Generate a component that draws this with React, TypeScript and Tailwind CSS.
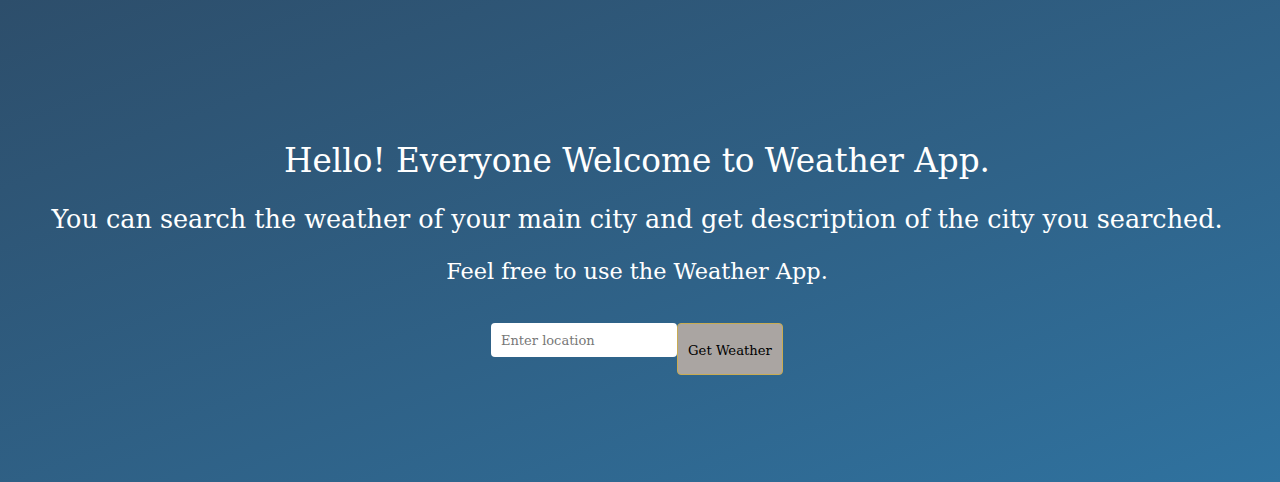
import React from "react";

export default function App() {
  return (
    <div
      className="w-[1280px] h-[482px] bg-gradient-to-br from-[#2d4e6b] to-[#2f729f] flex flex-col items-center text-white pr-[6px]"
      style={{ fontFamily: '"DejaVu Serif", Georgia, serif' }}
    >
      <h1 className="mt-[138px] text-[32.7px] leading-[46px] font-normal">Hello! Everyone Welcome to Weather App.</h1>
      <h2 className="mt-[17px] text-[25.5px] leading-[36px] font-normal">
        You can search the weather of your main city and get description of the city you searched.
      </h2>
      <p className="mt-[19px] text-[22.4px] leading-[30px]">Feel free to use the Weather App.</p>
      <div className="mt-[37px] flex items-start">
        <input
          type="text"
          placeholder="Enter location"
          className="w-[186px] h-[34px] rounded-[4px] bg-white px-[10px] text-[13px] text-black placeholder:text-[#777] outline-none"
        />
        <button className="w-[106px] h-[52px] rounded-[4px] bg-[#aaa5a2] border border-[#c9ac52] text-black text-[13.2px] pt-[4px]">
          Get Weather
        </button>
      </div>
    </div>
  );
}
